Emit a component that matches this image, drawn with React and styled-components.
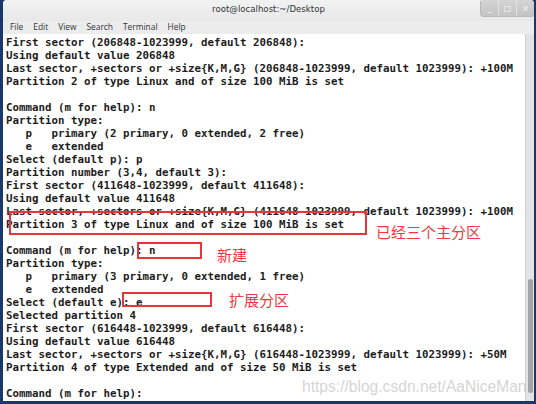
import styled, { createGlobalStyle } from 'styled-components';

const lines = [
  'First sector (206848-1023999, default 206848):',
  'Using default value 206848',
  'Last sector, +sectors or +size{K,M,G} (206848-1023999, default 1023999): +100M',
  'Partition 2 of type Linux and of size 100 MiB is set',
  '',
  'Command (m for help): n',
  'Partition type:',
  '   p   primary (2 primary, 0 extended, 2 free)',
  '   e   extended',
  'Select (default p): p',
  'Partition number (3,4, default 3):',
  'First sector (411648-1023999, default 411648):',
  'Using default value 411648',
  'Last sector, +sectors or +size{K,M,G} (411648-1023999, default 1023999): +100M',
  'Partition 3 of type Linux and of size 100 MiB is set',
  '',
  'Command (m for help): n',
  'Partition type:',
  '   p   primary (3 primary, 0 extended, 1 free)',
  '   e   extended',
  'Select (default e): e',
  'Selected partition 4',
  'First sector (616448-1023999, default 616448):',
  'Using default value 616448',
  'Last sector, +sectors or +size{K,M,G} (616448-1023999, default 1023999): +50M',
  'Partition 4 of type Extended and of size 50 MiB is set',
  '',
  'Command (m for help):',
];

const menus = ['File', 'Edit', 'View', 'Search', 'Terminal', 'Help'];

const boxes = [
  { left: 6, top: 177, width: 358, height: 24 },
  { left: 134, top: 208, width: 65, height: 17 },
  { left: 119, top: 258, width: 90, height: 15 },
];

const notes = [
  { left: 373, top: 189, text: '已经三个主分区' },
  { left: 214, top: 212, text: '新建' },
  { left: 226, top: 257, text: '扩展分区' },
];

export default function App() {
  return (
    <>
      <GlobalStyle />
      <Window>
        <TitleBar>
          <Title>root@localhost:~/Desktop</Title>
          <Controls>
            <Ctl>_</Ctl>
            <Ctl>□</Ctl>
            <Ctl>×</Ctl>
          </Controls>
        </TitleBar>
        <MenuBar>
          {menus.map((m) => (
            <MenuItem key={m}>{m}</MenuItem>
          ))}
        </MenuBar>
        <Body>
          <Screen>
            {lines.map((l, i) => (
              <Line key={i}>{l}</Line>
            ))}
            {boxes.map((b, i) => (
              <RedBox key={i} style={b} />
            ))}
            {notes.map((n, i) => (
              <Note key={i} style={{ left: n.left, top: n.top }}>
                {n.text}
              </Note>
            ))}
          </Screen>
          <Scrollbar>
            <Thumb />
          </Scrollbar>
          <Watermark>https://blog.csdn.net/AaNiceMan</Watermark>
        </Body>
      </Window>
    </>
  );
}

const GlobalStyle = createGlobalStyle`
  body {
    margin: 0;
    background: #19386b;
    overflow: hidden;
  }
`;

const Window = styled.div`
  margin-left: 3px;
  width: 531px;
  height: 401px;
  display: flex;
  flex-direction: column;
  background: #fff;
  border-radius: 4px 4px 0 0;
  overflow: hidden;
`;

const TitleBar = styled.div`
  height: 21px;
  flex: none;
  display: flex;
  align-items: center;
  justify-content: center;
  position: relative;
  background: linear-gradient(#f2f2f2, #e8e8e8);
`;

const Title = styled.span`
  font-family: 'DejaVu Sans', sans-serif;
  font-size: 8.6px;
  color: #2e3436;
  margin-top: -3px;
`;

const Controls = styled.div`
  position: absolute;
  right: 0;
  top: 0;
  display: flex;
  height: 16px;
  background: linear-gradient(#d4d4d4, #c4c4c4);
  border-radius: 0 0 0 4px;
  box-shadow: -1px 1px 0 #b8b8b8;
`;

const Ctl = styled.span`
  width: 17px;
  display: flex;
  align-items: center;
  justify-content: center;
  font-family: 'DejaVu Sans', sans-serif;
  font-size: 8px;
  color: #fafafa;
  border-left: 1px solid #e0e0e0;
  &:first-child {
    border-left: none;
  }
`;

const MenuBar = styled.div`
  height: 13px;
  flex: none;
  display: flex;
  align-items: center;
  gap: 10px;
  padding-left: 7px;
  background: #ececec;
`;

const MenuItem = styled.span`
  font-family: 'Open Sans', sans-serif;
  font-size: 8.4px;
  color: #2e3436;
  margin-top: -2px;
`;

const Body = styled.div`
  flex: 1;
  display: flex;
  position: relative;
  min-height: 0;
`;

const Screen = styled.div`
  flex: 1;
  position: relative;
  padding-left: 3px;
  padding-top: 2px;
  overflow: hidden;
  background: #fff;
`;

const Line = styled.div`
  height: 13px;
  line-height: 13px;
  white-space: pre;
  font-family: 'DejaVu Sans Mono', monospace;
  font-weight: bold;
  font-size: 10.8px;
  color: #1c1c1c;
`;

const RedBox = styled.div`
  position: absolute;
  box-sizing: border-box;
  border: 2px solid #e8343a;
`;

const Note = styled.span`
  position: absolute;
  font-family: 'Noto Sans CJK SC', sans-serif;
  font-size: 15px;
  line-height: 18px;
  color: #f0393e;
`;

const Scrollbar = styled.div`
  width: 8px;
  flex: none;
  background: #e4e4e4;
  border-left: 1px solid #d0d0d0;
  position: relative;
`;

const Thumb = styled.div`
  position: absolute;
  left: 2px;
  right: 1px;
  top: 245px;
  bottom: 8px;
  border-radius: 3px;
  background: #a4a4a4;
`;

const Watermark = styled.span`
  position: absolute;
  left: 299px;
  top: 344px;
  z-index: 2;
  font-family: 'Liberation Sans', sans-serif;
  font-size: 15.6px;
  color: rgba(175, 175, 175, 0.55);
  pointer-events: none;
`;
